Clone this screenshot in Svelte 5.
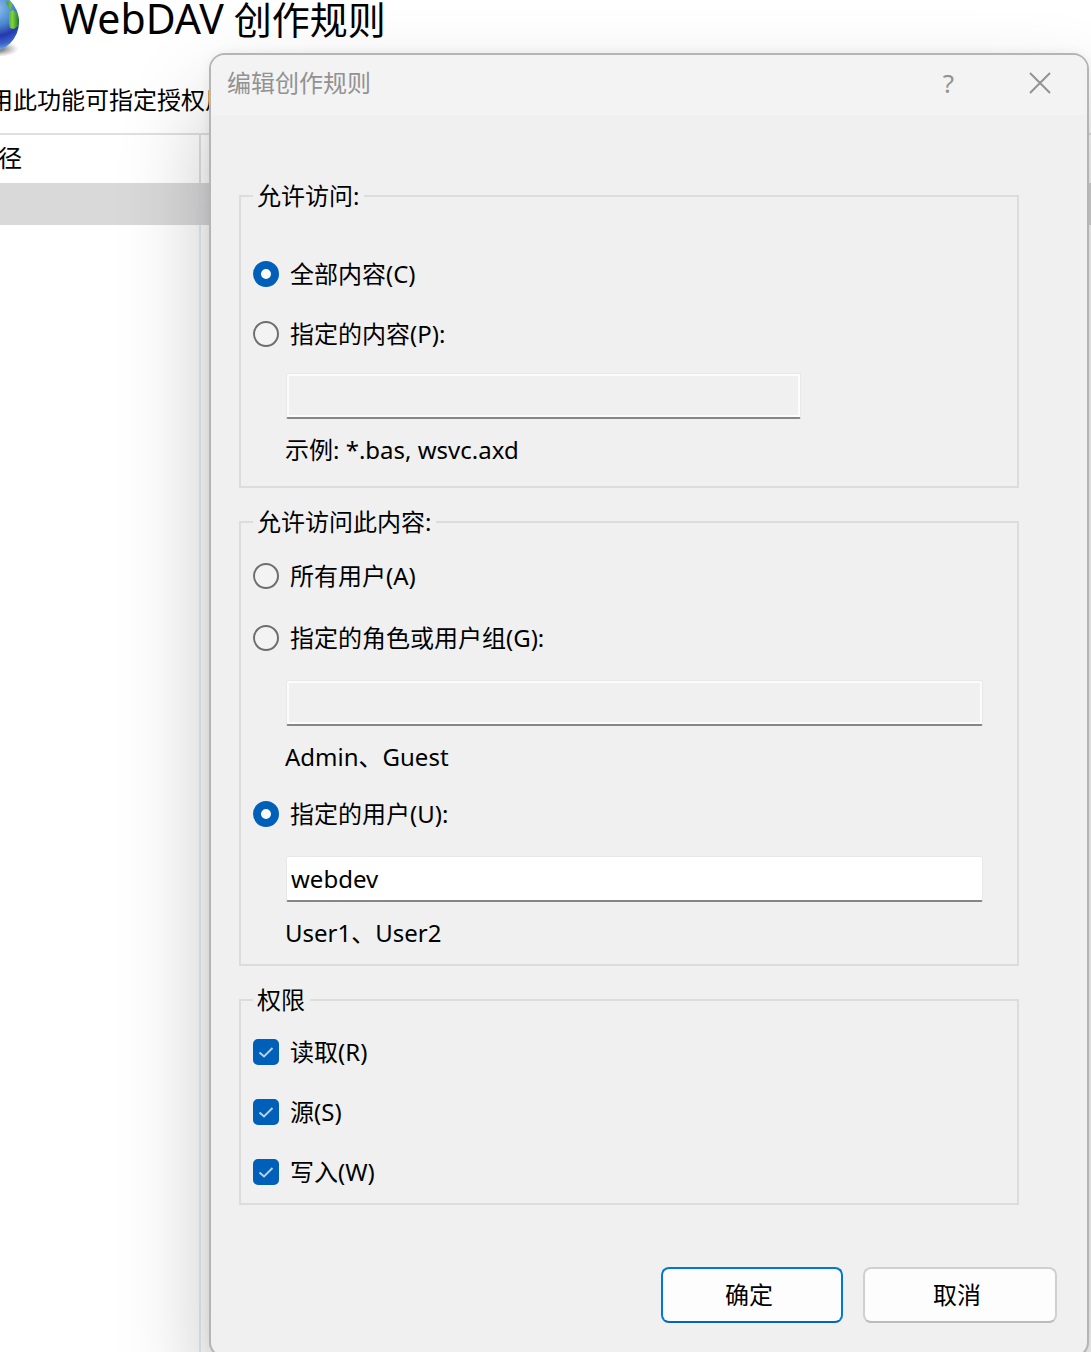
<script>
  let content = $state('all');
  let audience = $state('users');
  let paths = $state('');
  let roles = $state('');
  let users = $state('webdev');
  let permissions = $state([
    { id: 'read', label: '读取(R)', on: true },
    { id: 'source', label: '源(S)', on: true },
    { id: 'write', label: '写入(W)', on: true },
  ]);
</script>

<div class="desktop">
  <main class="page">
    <header class="heading">
      <svg class="globe" viewBox="0 0 20 56" aria-hidden="true">
        <defs>
          <radialGradient id="sea" gradientUnits="userSpaceOnUse" cx="-4" cy="8" r="44">
            <stop offset="0" stop-color="#8fc4ee" />
            <stop offset="0.4" stop-color="#4a86cf" />
            <stop offset="0.64" stop-color="#2538ad" />
            <stop offset="0.82" stop-color="#3a62c8" />
            <stop offset="1" stop-color="#74c4ee" />
          </radialGradient>
          <radialGradient id="shade" gradientUnits="userSpaceOnUse" cx="0" cy="0" r="1" gradientTransform="translate(-4 49) scale(23 8)">
            <stop offset="0.3" stop-color="#666" stop-opacity="0.8" />
            <stop offset="1" stop-color="#999" stop-opacity="0" />
          </radialGradient>
          <linearGradient id="land" x1="0" x2="1">
            <stop offset="0" stop-color="#3f9a2c" />
            <stop offset="0.5" stop-color="#7fd23e" />
            <stop offset="1" stop-color="#1f7a1c" />
          </linearGradient>
        </defs>
        <ellipse cx="-4" cy="49" rx="23" ry="8" fill="url(#shade)" />
        <circle cx="-11" cy="22" r="30" fill="url(#sea)" />
        <path d="M6 2l4-1 2 4-2 5-2-3zM9 12l4-2 4 3 2 7-1 6-4 3-4-1-1-5z" fill="url(#land)" />
      </svg>
      <h1><span class="latin">WebDAV</span> 创作规则</h1>
    </header>
    <p class="intro">用此功能可指定授权用</p>
    <table>
      <thead>
        <tr><th class="path">径</th><th></th></tr>
      </thead>
      <tbody>
        <tr class="selected"><td></td><td></td></tr>
        <tr class="rest"><td></td><td></td></tr>
      </tbody>
    </table>
  </main>

  <div class="dialog" role="dialog" aria-labelledby="dialog-title">
    <div class="titlebar">
      <h2 id="dialog-title">编辑创作规则</h2>
      <button class="tool" type="button" aria-label="帮助">?</button>
      <button class="tool" type="button" aria-label="关闭">
        <svg viewBox="0 0 22 22" aria-hidden="true"><path d="M1 1L21 21M21 1L1 21" /></svg>
      </button>
    </div>

    <form onsubmit={(event) => event.preventDefault()}>
      <fieldset class="scope">
        <legend>允许访问:</legend>
        <label class="option"><input type="radio" name="content" value="all" bind:group={content} />全部内容(C)</label>
        <label class="option"><input type="radio" name="content" value="some" bind:group={content} />指定的内容(P):</label>
        <input class="field short" type="text" aria-label="指定的内容" bind:value={paths} disabled={content !== 'some'} />
        <p class="hint">示例: *.bas, wsvc.axd</p>
      </fieldset>

      <fieldset class="audience">
        <legend>允许访问此内容:</legend>
        <label class="option"><input type="radio" name="audience" value="everyone" bind:group={audience} />所有用户(A)</label>
        <label class="option"><input type="radio" name="audience" value="roles" bind:group={audience} />指定的角色或用户组(G):</label>
        <input class="field" type="text" aria-label="指定的角色或用户组" bind:value={roles} disabled={audience !== 'roles'} />
        <p class="hint">Admin、Guest</p>
        <label class="option"><input type="radio" name="audience" value="users" bind:group={audience} />指定的用户(U):</label>
        <input class="field" type="text" aria-label="指定的用户" bind:value={users} disabled={audience !== 'users'} />
        <p class="hint">User1、User2</p>
      </fieldset>

      <fieldset class="permissions">
        <legend>权限</legend>
        {#each permissions as permission (permission.id)}
          <label class="option">
            <span class="tick">
              <input type="checkbox" bind:checked={permission.on} />
              <svg viewBox="0 0 26 26" aria-hidden="true"><path d="M6.5 13.5L11 17.5L19.5 9" /></svg>
            </span>{permission.label}
          </label>
        {/each}
      </fieldset>

      <div class="actions">
        <button class="ok" type="submit">确定</button>
        <button class="cancel" type="button">取消</button>
      </div>
    </form>
  </div>
</div>

<style>
  :global(body) {
    background: #fff;
  }
  .desktop, .desktop * {
    box-sizing: border-box;
  }
  .desktop {
    position: relative;
    min-height: 100vh;
    max-height: 100vh;
    overflow: hidden;
    color: #000;
    font: 24px/32px "Noto Sans", "Noto Sans CJK SC", sans-serif;
  }
  h1, h2, p {
    margin: 0;
    font-weight: 400;
  }
  button, input {
    font: inherit;
    color: inherit;
  }

  .heading {
    display: flex;
    align-items: flex-start;
    gap: 40px;
    height: 84px;
  }
  .globe {
    width: 20px;
    height: 56px;
    flex: none;
  }
  h1 {
    font-size: 38px;
    line-height: 36px;
    white-space: nowrap;
  }
  .latin {
    font-size: 41px;
  }
  .intro {
    margin-left: -11px;
    height: 49px;
    white-space: nowrap;
  }
  table {
    width: 100%;
    table-layout: fixed;
    border-collapse: separate;
    border-spacing: 0;
    border-top: 2px solid #e0e0e0;
  }
  th, td {
    padding: 0;
    height: 48px;
    text-align: left;
    font-weight: 400;
  }
  th.path {
    width: 201px;
    padding-bottom: 2px;
    text-indent: -2px;
    border-right: 2px solid #e0e0e0;
  }
  td {
    height: 42px;
  }
  td:first-child {
    border-right: 2px solid #e2edf8;
  }
  .selected td {
    background: #d9d9d9;
    border-color: #d3d7dc;
  }
  .rest td {
    height: 1140px;
  }

  .dialog {
    position: absolute;
    top: 53px;
    left: 209px;
    right: 2px;
    background: #f0f0f0;
    border: 2px solid #b5b5b5;
    border-radius: 16px;
    box-shadow: 0 48px 90px rgba(0, 0, 0, 0.24), 0 0 12px rgba(0, 0, 0, 0.06);
  }
  .titlebar {
    display: flex;
    align-items: center;
    height: 60px;
    padding: 0 2px 4px 16px;
    background: #f3f3f3;
    border-radius: 14px 14px 0 0;
    color: #929292;
  }
  h2 {
    flex: 1;
    font-size: 24px;
    line-height: 32px;
  }
  .tool {
    display: grid;
    place-items: center;
    width: 91px;
    height: 56px;
    padding: 0;
    border: 0;
    background: none;
    font-size: 26px;
  }
  .tool svg {
    width: 22px;
    height: 22px;
    fill: none;
    stroke: #929292;
    stroke-width: 2;
  }

  form {
    display: flex;
    flex-direction: column;
    gap: 18px;
    padding: 65px 30px 33px 28px;
  }
  fieldset {
    display: block;
    min-width: 0;
    margin: 0 38px 0 0;
    border: 2px solid #dcdcdc;
    padding: 20px 34px 15px 12px;
  }
  legend {
    margin: 0;
    padding: 0 5px 0 4px;
    height: 32px;
  }
  .scope {
    padding-top: 46px;
    padding-bottom: 20px;
  }
  .option {
    display: flex;
    align-items: center;
    gap: 11px;
    width: fit-content;
    height: 32px;
  }
  .option + .option {
    margin-top: 28px;
  }
  .audience {
    padding-top: 22px;
  }
  .audience .option + .option {
    margin-top: 30px;
  }
  .hint + .option {
    margin-top: 25px;
  }
  input[type="radio"], input[type="checkbox"] {
    appearance: none;
    flex: none;
    width: 26px;
    height: 26px;
    margin: 0;
  }
  input[type="radio"] {
    border: 2px solid #6e6e6e;
    border-radius: 50%;
    background: #f3f3f3;
  }
  input[type="radio"]:checked {
    border: 8px solid #005fb8;
    background: #fff;
  }
  .tick {
    display: grid;
    width: 26px;
    height: 26px;
  }
  .tick > * {
    grid-area: 1 / 1;
  }
  input[type="checkbox"] {
    border: 2px solid #6e6e6e;
    border-radius: 5px;
  }
  input[type="checkbox"]:checked {
    border-color: #005fb8;
    background: #005fb8;
  }
  .tick svg {
    width: 26px;
    height: 26px;
    fill: none;
    stroke: #b4d2ed;
    stroke-width: 2;
    pointer-events: none;
    visibility: hidden;
  }
  input:checked + svg {
    visibility: visible;
  }
  .field {
    display: block;
    width: calc(100% - 33px);
    height: 46px;
    margin: 26px 0 0 33px;
    padding: 0 4px;
    border: 1px solid #e8e8e8;
    border-bottom: 2px solid #868686;
    border-radius: 2px;
    outline: 0;
    background: #fff;
  }
  .field:disabled {
    background: #f0f0f0;
    box-shadow: inset 0 0 0 2px #fcfcfc;
  }
  .short {
    width: calc(74% - 25px);
    margin-top: 23px;
  }
  .hint {
    margin: 15px 0 0 32px;
  }
  .actions {
    display: flex;
    justify-content: flex-end;
    gap: 20px;
    padding-top: 44px;
  }
  .actions button {
    height: 56px;
    padding: 0 6px 0 0;
    border: 2px solid #d0d0d0;
    border-bottom-color: #bcbcbc;
    border-radius: 8px;
    background: #fdfdfd;
  }
  .actions .ok {
    width: 182px;
    border-color: #0078d4;
    border-bottom-color: #0067c0;
  }
  .actions .cancel {
    width: 194px;
  }
</style>
